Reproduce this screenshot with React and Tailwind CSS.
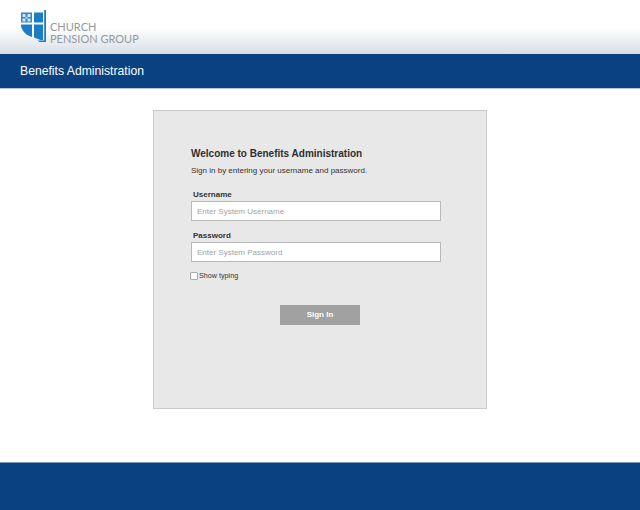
import { useState } from 'react'

function Logo() {
  return (
    <svg width="26" height="33" viewBox="0 0 26 33" className="shrink-0">
      {/* upper left checker panel */}
      <path d="M0 2.500h11v10H0z" fill="#2f84cc" />
      <path d="M1.500 4h3v3h-3zM6.500 4h3v3h-3zM1.500 8.500h3v3h-3zM6.500 8.500h3v3h-3zM4.500 7h2v1.500h-2z" fill="#d5e7f5" />
      <path d="M13 2.500h9v10h-9z" fill="#1b7cc8" />
      {/* lower shield */}
      <path d="M0 14.500h11v12.500C5 25.500 1 21 0 16z" fill="#1b7cc8" />
      <path d="M13 14.500h9V30h-2.500L13 27.500z" fill="#1b7cc8" />
      {/* upright on the right */}
      <path d="M23.200 0H25v32h-6.500l-2-1.500h6.700z" fill="#1b7cc8" />
    </svg>
  )
}

function Field({ label, placeholder, type = 'text' }) {
  return (
    <div>
      <label className="block pl-[2px] text-[8px] leading-[11px] font-bold text-[#333]">{label}</label>
      <input
        type={type}
        placeholder={placeholder}
        className="mt-[1px] block w-[250px] h-[20px] bg-white border border-[#b9b9b9] px-[5px] text-[8px] outline-none placeholder:text-[#a3a3a3]"
      />
    </div>
  )
}

export default function App() {
  const [show, setShow] = useState(false)

  return (
    <div className="h-[510px] w-[640px] flex flex-col bg-white overflow-hidden font-['Liberation_Sans',Arial,sans-serif]">
      {/* Header */}
      <header className="h-[54px] pl-[21px] pt-[10px] flex items-start bg-gradient-to-b from-white from-50% to-[#d9dee6]">
        <Logo />
        <div className="ml-[3px] mt-[11px] font-['Lato',sans-serif] text-[#94999d] text-[11px] leading-[12px]">
          <div>CHURCH</div>
          <div>PENSION GROUP</div>
        </div>
      </header>
      <div className="h-[35px] bg-[#0a4180] border-b border-[#b9c6d6] pl-[20px] flex items-center text-white text-[12.200px]">
        Benefits Administration
      </div>

      {/* Login card */}
      <main className="flex-1 flex justify-center pt-[21px]">
        <div className="w-[334px] h-[299px] bg-[#e8e8e8] border border-[#c9c9c9] pl-[37px] pt-[37px]">
          <h1 className="text-[10px] leading-[12px] font-bold text-[#2f2f2f]">Welcome to Benefits Administration</h1>
          <p className="mt-[5px] text-[8px] leading-[11px] text-[#333]">Sign in by entering your username and password.</p>
          <div className="mt-[13px] flex flex-col gap-[9px]">
            <Field label="Username" placeholder="Enter System Username" />
            <Field label="Password" placeholder="Enter System Password" type={show ? 'text' : 'password'} />
          </div>
          <label className="mt-[9px] flex items-center text-[7.200px] leading-[9px] text-[#333]">
            <input
              type="checkbox"
              checked={show}
              onChange={(e) => setShow(e.target.checked)}
              className="appearance-none -ml-[1px] w-[8px] h-[8px] mr-[1px] bg-white border border-[#aaa] rounded-[1px]"
            />
            Show typing
          </label>
          <button className="mt-[25px] ml-[89px] block w-[80px] h-[20px] bg-[#a1a1a1] text-white text-[8px] font-bold">
            Sign In
          </button>
        </div>
      </main>

      {/* Footer */}
      <footer className="h-[48px] bg-[#0a4180] border-t border-[#7f9cbd]" />
    </div>
  )
}
